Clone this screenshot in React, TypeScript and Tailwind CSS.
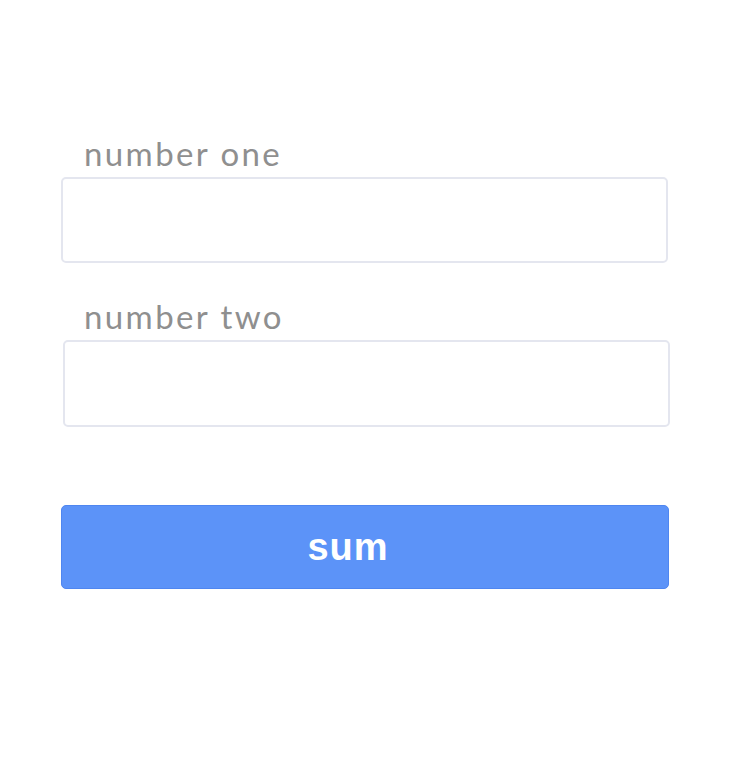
export default function App() {
  return (
    <div className="w-[740px] h-[780px] bg-white" style={{ fontFamily: "Lato, 'Noto Sans', sans-serif" }}>
      <div className="pt-[132px] pl-[61px] w-[669px]">
        <label className="block pl-[23px] text-[33px] leading-[42px] tracking-[2.4px] text-[#8f8f8f]">number one</label>
        <input className="mt-[3px] block w-[607px] h-[86px] border-2 border-[#e4e6ef] rounded-[5px] bg-white outline-none" />
        <label className="block mt-[32px] pl-[23px] text-[33px] leading-[42px] tracking-[2.4px] text-[#8f8f8f]">number two</label>
        <input className="mt-[3px] ml-[2px] block w-[607px] h-[87px] border-2 border-[#e4e6ef] rounded-[5px] bg-white outline-none" />
        <button
          className="mt-[78px] block w-[608px] h-[84px] pr-[34px] rounded-[5px] bg-[#5c93f8] border border-[#4f86f0] text-white text-[38px] tracking-[1px] font-bold"
          style={{ fontFamily: "'Liberation Sans', Arial, sans-serif" }}
        >
          sum
        </button>
      </div>
    </div>
  );
}
